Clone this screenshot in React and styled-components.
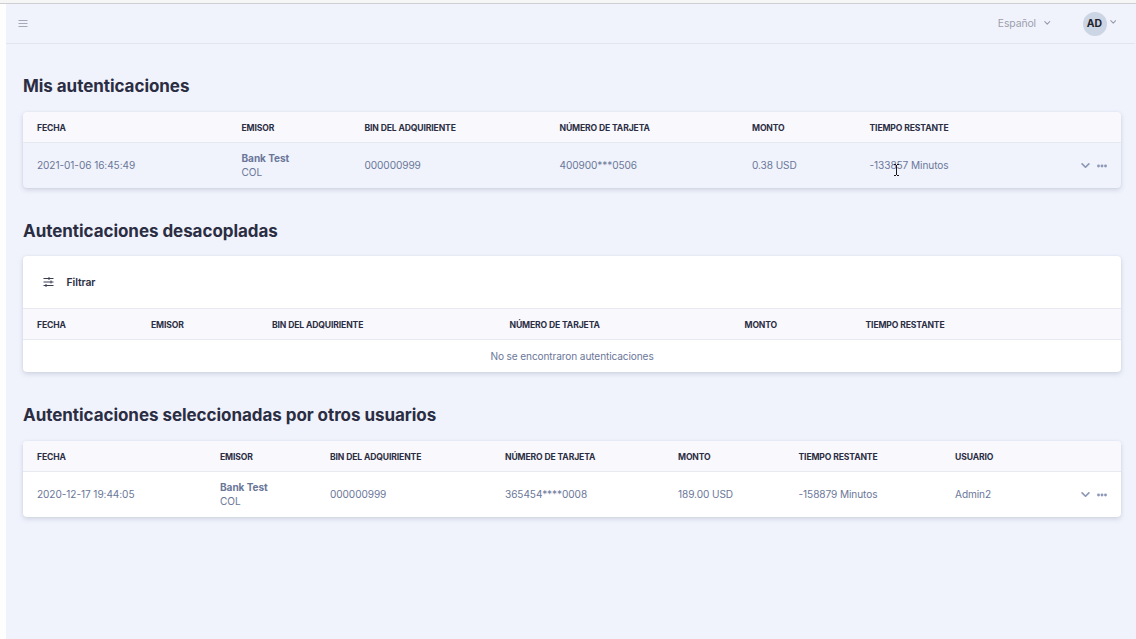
import React from "react";
import styled, { createGlobalStyle } from "styled-components";

const GlobalStyle = createGlobalStyle`
  * { box-sizing: border-box; }
  body { margin: 0; background: #fff; overflow: hidden; }
  #root { font-family: Inter, "Liberation Sans", sans-serif; }
`;

const Window = styled.div`
  height: 639px;
  display: flex;
  flex-direction: column;
  border-top: 3px solid #f6f6f7;
`;
const Shell = styled.div`
  flex: 1;
  display: flex;
  border-top: 1px solid #cdced1;
`;
const Gutter = styled.div`
  width: 6px;
  background: #fefefe;
`;
const Page = styled.div`
  flex: 1;
  background: #f0f3fc;
  border-right: 1px solid #f3f0f9;
`;
const TopBar = styled.header`
  height: 40px;
  padding: 0 19px 0 12px;
  display: flex;
  align-items: center;
  border-bottom: 1px solid #e2e5ee;
`;
const Language = styled.div`
  margin-left: auto;
  display: flex;
  align-items: center;
  gap: 8px;
  font-size: 10.4px;
  letter-spacing: -0.1px;
  line-height: 16px;
  color: #9c9eab;
`;
const Account = styled.div`
  margin-left: 32px;
  display: flex;
  align-items: center;
  gap: 3px;
`;
const Avatar = styled.div`
  width: 24px;
  height: 24px;
  border-radius: 50%;
  background: #cbd5e4;
  color: #23232d;
  font-size: 10.4px;
  font-weight: 700;
  line-height: 24px;
  text-align: center;
`;
const AccountArrow = styled.span`
  display: flex;
  padding-bottom: 3px;
`;
const Content = styled.main`
  padding: 30px 14px 0 17px;
`;
const Section = styled.section`
  margin-bottom: ${(p) => p.$gap}px;
`;
const Title = styled.h2`
  margin: 0 0 ${(p) => p.$space ?? 14}px;
  font-size: 17px;
  letter-spacing: -0.05px;
  line-height: 24px;
  font-weight: 700;
  color: #2b2d42;
  white-space: nowrap;
`;
const Card = styled.div`
  border-radius: 4px;
  overflow: hidden;
  background: ${(p) => (p.$tinted ? "#f0f3fc" : "#fff")};
  box-shadow: 0 2px 5px rgba(60, 75, 110, 0.18), 0 0 2px rgba(60, 75, 110, 0.08);
`;
const FilterBar = styled.div`
  height: 53px;
  padding-left: 20px;
  display: flex;
  align-items: center;
  gap: 12.5px;
  border-bottom: 1px solid #e7e8f0;
  font-size: 10.4px;
  letter-spacing: -0.1px;
  font-weight: 600;
  color: #2b2d42;
`;
const Row = styled.div`
  display: grid;
  grid-template-columns: ${(p) => p.$columns};
  align-items: center;
  padding: 0 14px;
  white-space: nowrap;
`;
const HeadRow = styled(Row)`
  height: 31px;
  padding-top: 2px;
  background: #f8f8fd;
  border-bottom: 1px solid #e7e9f1;
  font-size: 8.6px;
  letter-spacing: -0.13px;
  font-weight: 700;
  color: #2b2d42;
  text-transform: uppercase;
`;
const BodyRow = styled(Row)`
  height: 45px;
  padding-bottom: 2px;
  font-size: 10.1px;
  letter-spacing: -0.08px;
  line-height: 14px;
  color: #6b7799;
`;
const Empty = styled.div`
  height: 32px;
  font-size: 10.1px;
  letter-spacing: -0.11px;
  line-height: 33px;
  color: #6b7799;
  text-align: center;
`;
const Bank = styled.div`
  font-weight: 700;
`;
const Actions = styled.div`
  display: flex;
  justify-content: flex-end;
  align-items: center;
  gap: 7px;
  padding-top: 2px;
`;
const Hovered = styled.div`
  position: relative;
`;
const TextCursor = styled.svg`
  position: absolute;
  left: 23px;
  top: 1px;
`;

const Chevron = ({ width = 6.5, color = "#9699a8", stroke = 1.3 }) => (
  <svg width={width} height={width * 0.625} viewBox="0 0 8 5" fill="none">
    <path d="M1 .8 4 3.8 7 .8" stroke={color} strokeWidth={stroke} strokeLinecap="round" strokeLinejoin="round" />
  </svg>
);

const MenuIcon = () => (
  <svg width="11" height="9" viewBox="0 0 11 9" stroke="#a6a9b7" strokeWidth="1">
    <path d="M.5 1.5H9.5M.5 4.5H9.5M.5 7.5H9.5" />
  </svg>
);

const FilterIcon = () => (
  <svg width="11" height="10" viewBox="0 0 11 10" stroke="#3a3c50" strokeWidth="1" fill="none">
    <path d="M.5 1.5H10.5M.5 5H10.5M.5 8.5H10.5M6 0V3M8 3.5V6.5M3 7V10" />
  </svg>
);

const RowActions = () => (
  <Actions>
    <Chevron width={9} color="#8d98b6" stroke={1.5} />
    <svg width="10" height="4" viewBox="0 0 10 4" fill="#8d98b6">
      <circle cx="1.5" cy="2" r="1.45" />
      <circle cx="5" cy="2" r="1.45" />
      <circle cx="8.5" cy="2" r="1.45" />
    </svg>
  </Actions>
);

const mine = "204.5px 123px 195px 192.5px 117.5px 1fr 60px";
const decoupled = "114px 121px 237.5px 235px 121px 1fr";
const others = "183px 110px 175px 173px 120.5px 156.5px 1fr 60px";
const labels = ["Fecha", "Emisor", "Bin del adquiriente", "Número de tarjeta", "Monto", "Tiempo restante"];

const Head = ({ columns, items }) => (
  <HeadRow $columns={columns}>
    {items.map((label) => (
      <span key={label}>{label}</span>
    ))}
  </HeadRow>
);

const Issuer = () => (
  <div>
    <Bank>Bank Test</Bank>
    <div>COL</div>
  </div>
);

export default function App() {
  return (
    <Window>
      <GlobalStyle />
      <Shell>
        <Gutter />
        <Page>
          <TopBar>
            <MenuIcon />
            <Language>
              Español
              <Chevron />
            </Language>
            <Account>
              <Avatar>AD</Avatar>
              <AccountArrow>
                <Chevron />
              </AccountArrow>
            </Account>
          </TopBar>
          <Content>
            <Section $gap={31}>
              <Title>Mis autenticaciones</Title>
              <Card $tinted>
                <Head columns={mine} items={labels} />
                <BodyRow $columns={mine}>
                  <span>2021-01-06 16:45:49</span>
                  <Issuer />
                  <span>000000999</span>
                  <span>400900***0506</span>
                  <span>0.38 USD</span>
                  <Hovered>
                    -133857 Minutos
                    <TextCursor width="7" height="18" viewBox="0 0 7 18" fill="none" stroke="#17171c">
                      <path d="M1 5.5H3M4 5.5H6M3.5 6V16M1 16.5H3M4 16.5H6" />
                    </TextCursor>
                  </Hovered>
                  <RowActions />
                </BodyRow>
              </Card>
            </Section>
            <Section $gap={31}>
              <Title $space={13}>Autenticaciones desacopladas</Title>
              <Card>
                <FilterBar>
                  <FilterIcon />
                  Filtrar
                </FilterBar>
                <Head columns={decoupled} items={labels} />
                <Empty>No se encontraron autenticaciones</Empty>
              </Card>
            </Section>
            <Section $gap={0}>
              <Title>Autenticaciones seleccionadas por otros usuarios</Title>
              <Card>
                <Head columns={others} items={[...labels, "Usuario"]} />
                <BodyRow $columns={others}>
                  <span>2020-12-17 19:44:05</span>
                  <Issuer />
                  <span>000000999</span>
                  <span>365454****0008</span>
                  <span>189.00 USD</span>
                  <span>-158879 Minutos</span>
                  <span>Admin2</span>
                  <RowActions />
                </BodyRow>
              </Card>
            </Section>
          </Content>
        </Page>
      </Shell>
    </Window>
  );
}
